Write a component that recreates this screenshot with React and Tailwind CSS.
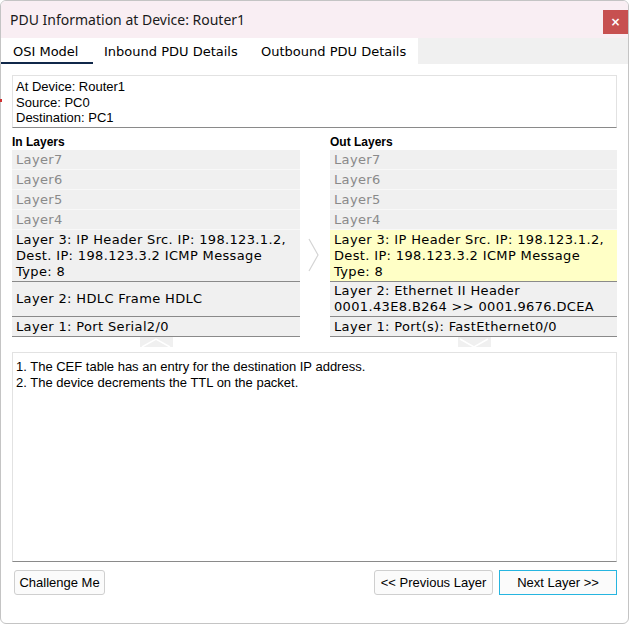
import React from 'react';

const ARIAL = { fontFamily: '"Liberation Sans", Arial, sans-serif' };

const Chevron = ({ dir }) => {
  // light outlined chevron used for the layer navigation arrows
  if (dir === 'right') {
    return (
      <svg width="12" height="34" viewBox="0 0 12 34">
        <path d="M1 1 L10 17 L1 33" fill="none" stroke="#d4d4d4" strokeWidth="1.2" />
      </svg>
    );
  }
  const d = dir === 'up' ? 'M2 10 L16 2 L30 10' : 'M2 2 L16 10 L30 2';
  return (
    <div className="w-[33px] h-[10px] bg-[#f0f0f0]">
      <svg width="33" height="10" viewBox="0 0 33 10">
        <path d={d} fill="none" stroke="#ffffff" strokeWidth="1.5" />
      </svg>
    </div>
  );
};

const LayerStack = ({ title, layer3Active, layer2, layer1, arrow }) => (
  <div className="flex flex-col">
    <div className="h-[15px] text-[12px] font-bold leading-[14px] text-black" style={ARIAL}>{title}</div>
    <div className="font-['DejaVu_Sans',Verdana,sans-serif] text-[13px] tracking-[0.35px]">
      {['Layer7', 'Layer6', 'Layer5', 'Layer4'].map((l) => (
        <div key={l} className="h-[20px] bg-[#f0f0f0] border-b border-[#f8f8f8] pl-[4px] leading-[19px] text-[#8a8a8a]">
          {l}
        </div>
      ))}
      <div className={`h-[52px] border-b border-[#8a8a8a] pl-[4px] pt-[2px] leading-[16px] text-black ${layer3Active ? 'bg-[#ffffc6]' : 'bg-[#f0f0f0]'}`}>
        Layer 3: IP Header Src. IP: 198.123.1.2,<br />
        Dest. IP: 198.123.3.2 ICMP Message<br />
        Type: 8
      </div>
      <div className="h-[35px] bg-[#f0f0f0] border-b border-[#8a8a8a] pl-[4px] leading-[16px] text-black flex flex-col justify-center">
        {layer2.map((t) => (
          <div key={t}>{t}</div>
        ))}
      </div>
      <div className="h-[20px] bg-[#f0f0f0] border-b border-[#8a8a8a] pl-[4px] leading-[20px] text-black">{layer1}</div>
    </div>
    <div className="flex justify-center pl-[1px]">
      <Chevron dir={arrow} />
    </div>
  </div>
);

export default function App() {
  return (
    <div className="relative w-[630px] h-[625px] bg-white overflow-hidden">
      <div className="absolute left-0 top-[99px] w-[2px] h-[3px] bg-[#d03030]" />
      <div className="flex flex-col w-[629px] h-[624px] border border-[#c4c4c4] rounded-[6px] overflow-hidden bg-white">
        {/* Title bar */}
        <div className="h-[37px] bg-[#f9eef3] flex justify-between shrink-0">
          <div className="pl-[9px] pt-[9px] text-[14px] text-[#1a1a1a] font-['Noto_Sans',sans-serif] leading-[20px]">
            PDU Information at Device: Router1
          </div>
          <div className="mt-[9px] w-[25px] h-[24px] bg-[#c75050] flex items-center justify-center text-white text-[12px] font-bold font-['DejaVu_Sans',sans-serif]">
            ×
          </div>
        </div>

        {/* Tabs */}
        <div className="h-[26px] flex shrink-0 font-['DejaVu_Sans',Verdana,sans-serif] text-[13px] text-black">
          <div className="w-[92px] flex flex-col">
            <div className="flex-1 pl-[12px] pt-[4px]">OSI Model</div>
            <div className="h-[4px] bg-[#10284a]" />
          </div>
          <div className="pl-[11px] pt-[4px] w-[157px]">Inbound PDU Details</div>
          <div className="pl-[11px] pt-[4px] w-[168px]">Outbound PDU Details</div>
          <div className="flex-1 bg-[#f0f0f0]" />
        </div>

        {/* Content */}
        <div className="flex-1 flex flex-col px-[11px]">
          <div
            className="mt-[11px] h-[53px] border border-[#e2e2e2] border-b-[#8a8a8a] pl-[3px] pt-[3px] text-[13px] leading-[15.5px] text-black"
            style={ARIAL}
          >
            <div>At Device: Router1</div>
            <div>Source: PC0</div>
            <div>Destination: PC1</div>
          </div>

          <div className="mt-[7px] grid grid-cols-[288px_30px_287px]">
            <LayerStack
              title="In Layers"
              layer2={['Layer 2: HDLC Frame HDLC']}
              layer1="Layer 1: Port Serial2/0"
              arrow="up"
            />
            <div className="flex justify-center pt-[103px] pr-[2px]">
              <Chevron dir="right" />
            </div>
            <LayerStack
              title="Out Layers"
              layer3Active
              layer2={['Layer 2: Ethernet II Header', '0001.43E8.B264 >> 0001.9676.DCEA']}
              layer1="Layer 1: Port(s): FastEthernet0/0"
              arrow="down"
            />
          </div>

          <div
            className="mt-[5px] h-[210px] border border-[#e2e2e2] border-b-[#8a8a8a] pl-[3px] pt-[6px] text-[13px] leading-[16px] text-black"
            style={ARIAL}
          >
            <div>1. The CEF table has an entry for the destination IP address.</div>
            <div>2. The device decrements the TTL on the packet.</div>
          </div>

          <div className="mt-[8px] flex items-center text-[13px] text-black" style={ARIAL}>
            <button className="ml-[2px] w-[91px] h-[25px] bg-[#fbfbfb] border border-[#cfcfcf] rounded-[3px]">
              Challenge Me
            </button>
            <div className="flex-1" />
            <button className="w-[119px] h-[25px] bg-[#fbfbfb] border border-[#cfcfcf] rounded-[3px]">
              &lt;&lt; Previous Layer
            </button>
            <button className="ml-[6px] w-[118px] h-[25px] bg-[#fbfbfb] border border-[#26b5e0]">
              Next Layer &gt;&gt;
            </button>
          </div>
        </div>
      </div>
    </div>
  );
}
